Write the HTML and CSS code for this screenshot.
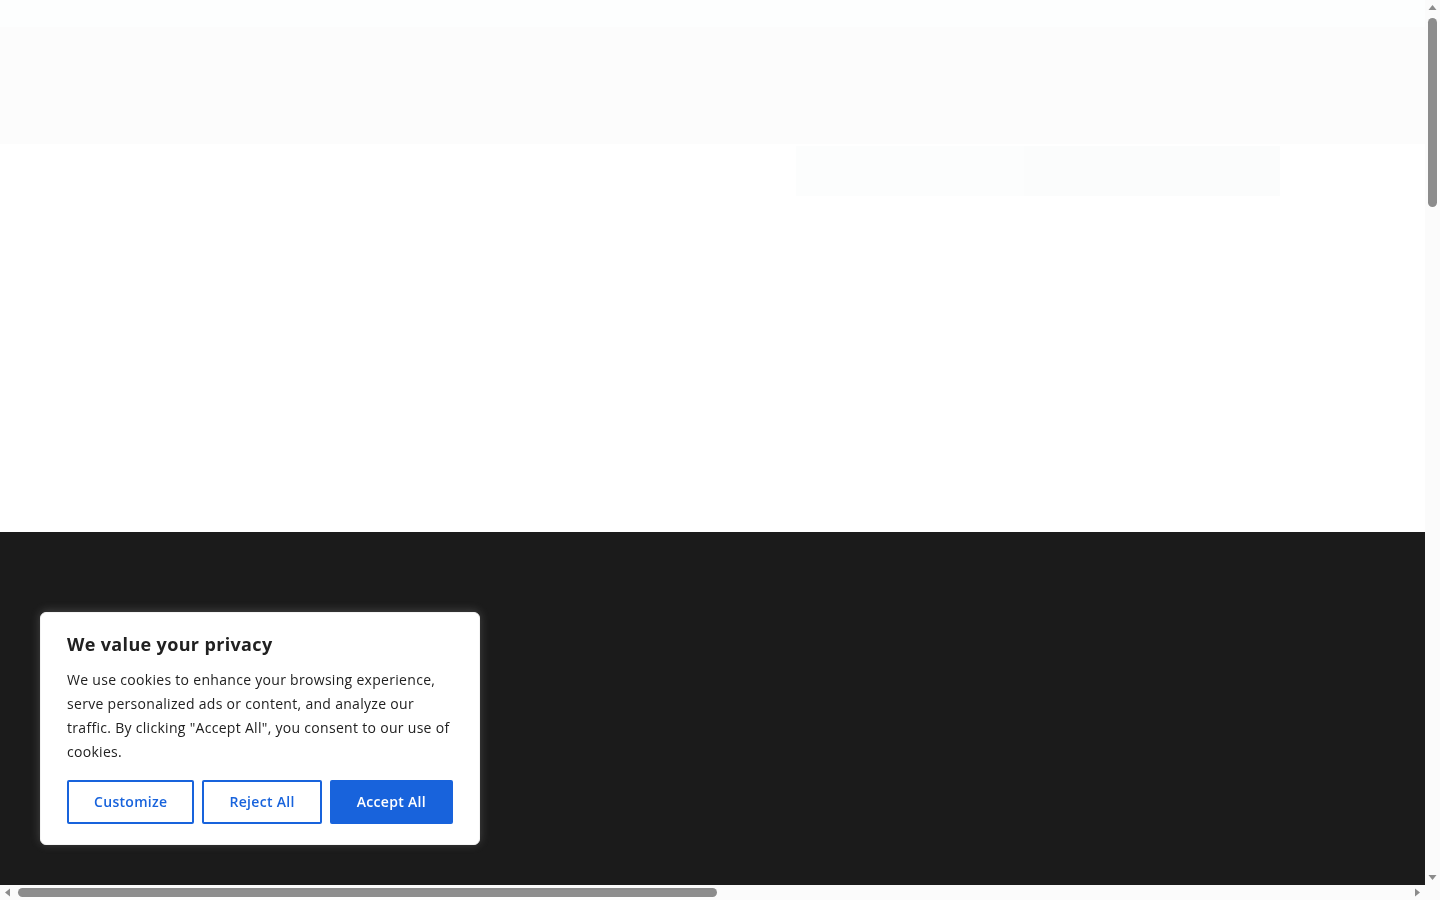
FILE: index.html
```html
<!DOCTYPE html>
<html lang="en">
<head>
<meta charset="utf-8">
<title>Page</title>
<link rel="stylesheet" href="styles.css">
</head>
<body>
<div class="window">
  <div class="viewport">
    <header class="site-header">
      <div class="topbar"></div>
      <div class="mainbar"></div>
    </header>
    <section class="hero">
      <div class="skeleton-row">
        <div class="skel skel-a"></div>
        <div class="skel skel-b"></div>
      </div>
    </section>
    <footer class="site-footer"></footer>
  </div>

  <div class="vscroll">
    <svg class="arrow" width="15" height="15" viewBox="0 0 15 15"><polygon points="3.5,10 11.5,10 7.5,5" fill="#8c8c8c"/></svg>
    <div class="vtrack"><div class="vthumb"></div></div>
    <svg class="arrow" width="15" height="15" viewBox="0 0 15 15"><polygon points="3.5,5 11.5,5 7.5,10" fill="#8c8c8c"/></svg>
  </div>

  <div class="hscroll">
    <svg class="arrow" width="15" height="15" viewBox="0 0 15 15"><polygon points="10,3.5 10,11.5 5,7.5" fill="#8c8c8c"/></svg>
    <div class="htrack"><div class="hthumb"></div></div>
    <svg class="arrow" width="15" height="15" viewBox="0 0 15 15"><polygon points="5,3.5 5,11.5 10,7.5" fill="#8c8c8c"/></svg>
  </div>

  <div class="corner"></div>
</div>

<div class="cky-banner" role="dialog" aria-label="We value your privacy">
  <p class="cky-title">We value your privacy</p>
  <p class="cky-desc">We use cookies to enhance your browsing experience, serve personalized ads or content, and analyze our traffic. By clicking "Accept All", you consent to our use of cookies.</p>
  <div class="cky-btns">
    <button class="cky-btn cky-btn-outline">Customize</button>
    <button class="cky-btn cky-btn-outline">Reject All</button>
    <button class="cky-btn cky-btn-accept">Accept All</button>
  </div>
</div>
</body>
</html>
```

FILE: styles.css
```css
html, body {
  margin: 0;
  padding: 0;
  background: #ffffff;
  overflow: hidden;
}

body {
  font-family: "Open Sans", "Liberation Sans", sans-serif;
}

.window {
  display: grid;
  grid-template-columns: 1425px 15px;
  grid-template-rows: 885px 15px;
  width: 1440px;
  height: 900px;
}

.viewport {
  display: flex;
  flex-direction: column;
  overflow: hidden;
}

.site-header {
  display: flex;
  flex-direction: column;
}

.topbar {
  height: 27px;
  background: #fdfefe;
}

.mainbar {
  height: 117px;
  background: #fcfcfc;
}

.hero {
  height: 388px;
  box-sizing: border-box;
  padding: 2px 0 0 796px;
  background: #ffffff;
}

.skeleton-row {
  display: flex;
  width: 484px;
  height: 50px;
}

.skel {
  height: 100%;
}

.skel-a {
  width: 228px;
  background: #fcfdfd;
}

.skel-b {
  flex: 1;
  background: #fbfcfc;
}

.site-footer {
  flex: 1;
  background: #1b1b1b;
}

/* Scrollbars */
.vscroll {
  display: flex;
  flex-direction: column;
  background: #fbfbfb;
}

.vtrack {
  flex: 1;
  padding-top: 3px;
}

.vthumb {
  width: 9px;
  height: 189px;
  margin: 0 auto;
  border-radius: 5px;
  background: #8c8c8c;
}

.hscroll {
  display: flex;
  background: #fbfbfb;
}

.htrack {
  flex: 1;
  display: flex;
  align-items: center;
  padding-left: 3px;
}

.hthumb {
  width: 699px;
  height: 9px;
  border-radius: 5px;
  background: #8c8c8c;
}

.arrow {
  display: block;
  flex: none;
}

.corner {
  background: #fbfbfb;
}

/* Cookie banner */
.cky-banner {
  position: fixed;
  left: 40px;
  bottom: 55px;
  width: 440px;
  box-sizing: border-box;
  padding: 19px 26px 20px;
  background: #ffffff;
  border: 1px solid #f4f4f4;
  border-radius: 6px;
  box-shadow: 0 -1px 10px 0 rgba(172, 171, 171, 0.3);
  color: #212121;
}

.cky-title {
  margin: 0 0 12px;
  font-size: 18px;
  font-weight: 700;
  line-height: 24px;
  letter-spacing: 0.35px;
  color: #212121;
}

.cky-desc {
  margin: 0;
  font-size: 14px;
  line-height: 24px;
  letter-spacing: 0.3px;
  color: #212121;
}

.cky-btns {
  display: flex;
  gap: 8px;
  margin-top: 16px;
}

.cky-btn {
  flex: auto;
  font-family: inherit;
  font-size: 14px;
  font-weight: 600;
  line-height: 24px;
  letter-spacing: 0.3px;
  padding: 8px;
  border: 2px solid #1863dc;
  border-radius: 2px;
  cursor: pointer;
  text-align: center;
}

.cky-btn-outline {
  background: transparent;
  color: #1863dc;
}

.cky-btn-accept {
  background: #1863dc;
  color: #ffffff;
}
```
